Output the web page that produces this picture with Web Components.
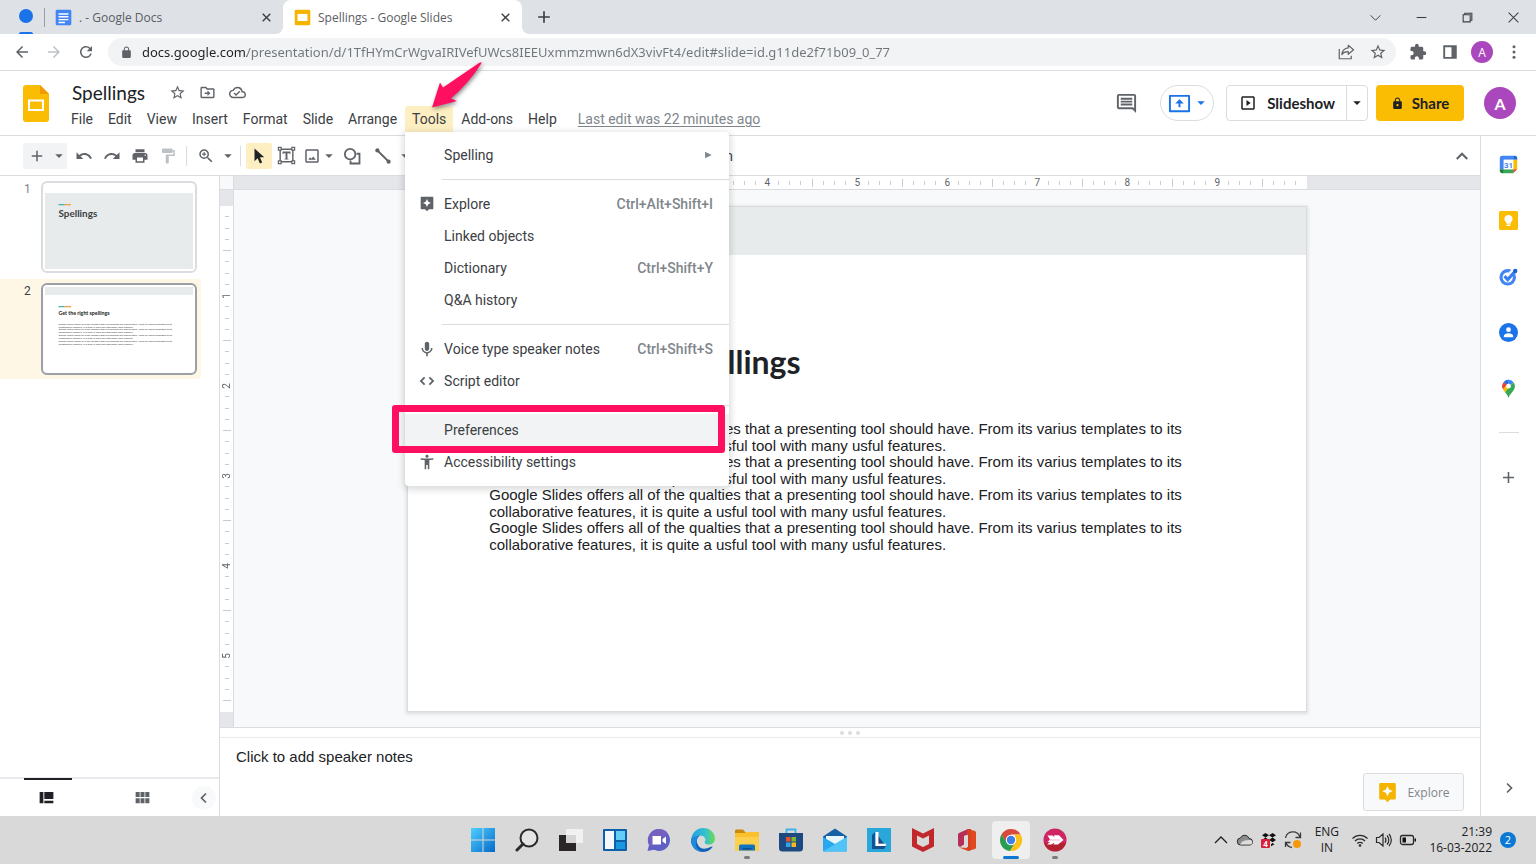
<!DOCTYPE html>
<html lang="en">
<head>
<meta charset="utf-8">
<title>Spellings - Google Slides</title>
<style>
  html, body {
    margin: 0;
    height: 100%;
  }
  body {
    font-family: Roboto, "Liberation Sans", sans-serif;
    font-size: 14px;
    color: #202124;
    overflow: hidden;
  }
</style>
</head>
<body>
<slides-window>
  <browser-tabs slot="tabs"></browser-tabs>
  <browser-bar slot="bar"></browser-bar>
  <app-header slot="header"></app-header>
  <edit-toolbar slot="toolbar"></edit-toolbar>
  <film-strip slot="film"></film-strip>
  <slide-canvas slot="canvas">
    <slide-page>
      <span slot="title">Get the right spellings</span>
      <p>Google Slides offers all of the qualties that a presenting tool should have. From its varius templates to its collaborative features, it is quite a usful tool with many usful features.</p>
      <p>Google Slides offers all of the qualties that a presenting tool should have. From its varius templates to its collaborative features, it is quite a usful tool with many usful features.</p>
      <p>Google Slides offers all of the qualties that a presenting tool should have. From its varius templates to its collaborative features, it is quite a usful tool with many usful features.</p>
      <p>Google Slides offers all of the qualties that a presenting tool should have. From its varius templates to its collaborative features, it is quite a usful tool with many usful features.</p>
    </slide-page>
  </slide-canvas>
  <speaker-notes slot="notes"></speaker-notes>
  <side-panel slot="side"></side-panel>
  <task-bar slot="taskbar"></task-bar>
</slides-window>

<script>
const ICONS = {
  back: '<path d="M20 11H7.83l5.59-5.59L12 4l-8 8 8 8 1.41-1.41L7.83 13H20v-2z"/>',
  forward: '<path d="M12 4l-1.41 1.41L16.17 11H4v2h12.17l-5.58 5.59L12 20l8-8z"/>',
  reload: '<path d="M17.65 6.35A7.958 7.958 0 0 0 12 4c-4.42 0-7.99 3.58-7.99 8s3.57 8 7.99 8c3.73 0 6.84-2.55 7.73-6h-2.08A5.99 5.99 0 0 1 12 18c-3.31 0-6-2.69-6-6s2.69-6 6-6c1.66 0 3.14.69 4.22 1.78L13 11h7V4l-2.35 2.35z"/>',
  lock: '<path d="M18 8h-1V6c0-2.76-2.24-5-5-5S7 3.24 7 6v2H6c-1.1 0-2 .9-2 2v10c0 1.1.9 2 2 2h12c1.1 0 2-.9 2-2V10c0-1.1-.9-2-2-2zm-2.9 0H8.9V6c0-1.71 1.39-3.1 3.1-3.1s3.1 1.39 3.1 3.1v2z"/>',
  lockHole: '<path d="M18 8h-1V6c0-2.76-2.24-5-5-5S7 3.24 7 6v2H6c-1.1 0-2 .9-2 2v10c0 1.1.9 2 2 2h12c1.1 0 2-.9 2-2V10c0-1.1-.9-2-2-2zm-6 9c-1.1 0-2-.9-2-2s.9-2 2-2 2 .9 2 2-.9 2-2 2zm3.1-9H8.9V6c0-1.71 1.39-3.1 3.1-3.1s3.1 1.39 3.1 3.1v2z"/>',
  share: '<g fill="none" stroke="currentColor" stroke-width="1.6" stroke-linejoin="round"><path d="M3 8v13h16v-4"/><path d="M15 3l7 6-7 6v-3.5c-4 0-6.500 1-8.500 4C7 10.500 10 7 15 6.500z"/></g>',
  star: '<path d="M22 9.24l-7.19-.62L12 2 9.19 8.63 2 9.24l5.46 4.73L5.82 21 12 17.27 18.18 21l-1.63-7.03L22 9.24zM12 15.4l-3.76 2.27 1-4.28-3.32-2.88 4.38-.38L12 6.1l1.71 4.04 4.38.38-3.32 2.88 1 4.28L12 15.4z"/>',
  puzzle: '<path d="M20.5 11H19V7c0-1.1-.9-2-2-2h-4V3.500a2.500 2.500 0 0 0-5 0V5H4c-1.100 0-1.990.9-1.990 2v3.800H3.500c1.490 0 2.700 1.210 2.700 2.700s-1.210 2.700-2.700 2.700H2V20c0 1.100.9 2 2 2h3.800v-1.500c0-1.490 1.210-2.700 2.700-2.700s2.700 1.210 2.700 2.700V22H17c1.100 0 2-.9 2-2v-4h1.500a2.500 2.500 0 0 0 0-5z"/>',
  panel: '<path d="M3 3h18v18H3zM5.500 5.500v13H14v-13z" fill-rule="evenodd"/>',
  dots: '<circle cx="12" cy="5" r="2"/><circle cx="12" cy="12" r="2"/><circle cx="12" cy="19" r="2"/>',
  close: '<path d="M5 5l14 14M19 5L5 19" stroke="currentColor" stroke-width="2.600"/>',
  winDown: '<path d="M3 8l9 9 9-9" fill="none" stroke="currentColor" stroke-width="1.800"/>',
  winMin: '<path d="M3 12h18" stroke="currentColor" stroke-width="2"/>',
  winRestore: '<path d="M4 7h13v13H4zM7 7V4h13v13h-3" fill="none" stroke="currentColor" stroke-width="2"/>',
  winClose: '<path d="M3 3l18 18M21 3L3 21" stroke="currentColor" stroke-width="1.900"/>',
  add: '<path d="M19 13h-6v6h-2v-6H5v-2h6V5h2v6h6v2z"/>',
  move: '<path d="M20 6h-8l-2-2H4c-1.100 0-2 .9-2 2v12c0 1.100.9 2 2 2h16c1.100 0 2-.9 2-2V8c0-1.100-.9-2-2-2zm0 12H4V6h5.170l2 2H20v10z"/><path d="M12 17l4-4-4-4v3H8v2h4z"/>',
  cloudDone: '<path d="M19.350 10.040A7.490 7.490 0 0 0 12 4C9.110 4 6.600 5.640 5.350 8.040A5.994 5.994 0 0 0 0 14c0 3.310 2.690 6 6 6h13c2.760 0 5-2.240 5-5 0-2.640-2.050-4.780-4.650-4.960zM19 18H6c-2.210 0-4-1.790-4-4 0-2.050 1.530-3.760 3.560-3.970l1.070-.11.5-.95A5.469 5.469 0 0 1 12 6c2.620 0 4.880 1.860 5.390 4.430l.3 1.500 1.530.11A2.980 2.980 0 0 1 22 15c0 1.650-1.350 3-3 3zm-9-3.820l-2.090-2.090L6.500 13.500 10 17l6.010-6.010-1.410-1.410z"/>',
  comment: '<path d="M21.990 4c0-1.100-.89-2-1.990-2H4c-1.100 0-2 .9-2 2v12c0 1.100.9 2 2 2h14l4 4-.01-18zM20 4v13.170L18.830 16H4V4h16zM6 12h12v2H6zm0-3h12v2H6zm0-3h12v2H6z"/>',
  present: '<path d="M2 3h20a1 1 0 0 1 1 1v16a1 1 0 0 1-1 1H2a1 1 0 0 1-1-1V4a1 1 0 0 1 1-1zm1 2v14h18V5z" fill-rule="evenodd"/><path d="M12 7.500l4.500 4.500H13v4h-2v-4H7.500z"/>',
  slideshow: '<path d="M10 8v8l5.500-4zM19 3H5c-1.100 0-2 .9-2 2v14c0 1.100.9 2 2 2h14c1.100 0 2-.9 2-2V5c0-1.100-.9-2-2-2zm0 16H5V5h14v14z"/>',
  caret: '<path d="M3 8h18l-9 9z"/>',
  caretRight: '<path d="M5 4l16 8-16 8z"/>',
  undo: '<path d="M12.500 8c-2.650 0-5.050.99-6.900 2.600L2 7v9h9l-3.620-3.620c1.390-1.160 3.160-1.880 5.120-1.880 3.540 0 6.550 2.310 7.600 5.500l2.370-.78C21.080 11.030 17.150 8 12.500 8z"/>',
  redo: '<path d="M18.400 10.600C16.550 8.990 14.150 8 11.500 8c-4.650 0-8.580 3.030-9.960 7.220L3.900 16a8.002 8.002 0 0 1 7.600-5.500c1.950 0 3.730.72 5.120 1.880L13 16h9V7l-3.600 3.600z"/>',
  print: '<path d="M19 8H5c-1.660 0-3 1.340-3 3v6h4v4h12v-4h4v-6c0-1.660-1.340-3-3-3zm-3 11H8v-5h8v5zm3-7c-.55 0-1-.45-1-1s.45-1 1-1 1 .45 1 1-.45 1-1 1zm-1-9H6v4h12V3z"/>',
  paint: '<path d="M18 4V3c0-.55-.45-1-1-1H5c-.55 0-1 .45-1 1v4c0 .55.45 1 1 1h12c.55 0 1-.45 1-1V6h1v4H9v11c0 .55.45 1 1 1h2c.55 0 1-.45 1-1v-9h8V4h-3z"/>',
  zoom: '<path d="M15.500 14h-.79l-.28-.27A6.471 6.471 0 0 0 16 9.500 6.500 6.500 0 1 0 9.500 16c1.610 0 3.090-.59 4.230-1.570l.27.28v.79l5 4.990L20.490 19l-4.990-5zm-6 0C7.010 14 5 11.990 5 9.500S7.010 5 9.500 5 14 7.010 14 9.500 11.990 14 9.500 14zM10.200 6.800H8.800v2h-2v1.400h2v2h1.400v-2h2V8.800h-2z"/>',
  pointer: '<path d="M6 2v17l4.200-4 3 7 3-1.300-3-6.900H19z"/>',
  textBox: '<path d="M4 4h16v16H4z" fill="none" stroke="currentColor" stroke-width="1.800"/><path d="M1 1h5v5H1zM18 1h5v5h-5zM1 18h5v5H1zM18 18h5v5h-5z"/><path d="M2.500 2.500h2v2h-2zM19.500 2.500h2v2h-2zM2.500 19.500h2v2h-2zM19.500 19.500h2v2h-2z" fill="#fff"/><path d="M7 7h10v3h-1.200V9.200h-2.600V16h1.300v1.200h-5V16h1.300V9.200H8.200V10H7z"/>',
  image: '<path d="M19 3H5c-1.100 0-2 .9-2 2v14c0 1.100.9 2 2 2h14c1.100 0 2-.9 2-2V5c0-1.100-.9-2-2-2zm0 16H5V5h14zM7 17l2.500-3.500 1.800 2.200 2.400-3.200L17 17z" fill-rule="evenodd"/>',
  shape: '<g fill="none" stroke="currentColor" stroke-width="2.400"><circle cx="9.500" cy="9.500" r="7"/><path d="M18 9h4v13H10v-4"/></g>',
  line: '<path d="M5 5l14 14" stroke="currentColor" stroke-width="2.400"/><circle cx="4.500" cy="4.500" r="2.800"/><circle cx="19.500" cy="19.500" r="2.800"/>',
  up: '<path d="M3 17l9-9 9 9" fill="none" stroke="currentColor" stroke-width="3.600"/>',
  left: '<path d="M16 3l-9 9 9 9" fill="none" stroke="currentColor" stroke-width="3.400"/>',
  right: '<path d="M8 3l9 9-9 9" fill="none" stroke="currentColor" stroke-width="3.400"/>',
  explore: '<path d="M20 1H4c-.8 0-1.500.7-1.500 1.500v16c0 .8.7 1.500 1.500 1.500h5l3 3 3-3h5c.8 0 1.500-.7 1.500-1.500v-16c0-.8-.7-1.500-1.500-1.500zm-6.100 11.400L12 16.500l-1.900-4.100L6 10.500l4.100-1.900L12 4.500l1.900 4.100L18 10.500z"/>',
  mic: '<path d="M12 15c2 0 3.300-1.500 3.300-3.300V4.300C15.300 2.500 14 1 12 1S8.700 2.500 8.700 4.300v7.400C8.700 13.500 10 15 12 15zm6-4.500c0 3.600-2.800 6.200-6 6.200s-6-2.600-6-6.200H3.700c0 4.200 3.200 7.500 7.100 8.100V23h2.400v-4.400c3.900-.6 7.100-3.900 7.100-8.100z"/>',
  code: '<path d="M9.400 16.600L4.800 12l4.600-4.600L7.500 5.500 1 12l6.500 6.500zm5.200 0l4.600-4.600-4.600-4.600 1.900-1.900L23 12l-6.500 6.500z"/>',
  person: '<path d="M12 1c1.300 0 2.400 1 2.400 2.300S13.300 5.600 12 5.600s-2.400-1-2.400-2.300S10.700 1 12 1zm9.500 7.500L15.500 9v14h-2.300v-6.500h-2.400V23H8.500V9l-6-.5V6.300l5.500.5h8l5.500-.5z"/>',
  filmView: '<path d="M1 3h6v18H1zM8.500 3H23v11.500H8.500zM8.500 17H23v4H8.500z"/>',
  gridView: '<path d="M1 3h6.500v8H1zM8.800 3h6.400v8H8.800zM16.500 3H23v8h-6.500zM1 13h6.500v8H1zM8.800 13h6.400v8H8.800zM16.500 13H23v8h-6.500z"/>',
  docs: '<rect x="1" y="1" width="22" height="22" rx="2" fill="#4285f4"/><path d="M5 7h14M5 11h14M5 15h14M5 19h9" stroke="#fff" stroke-width="2"/>',
  slides: '<rect x="1" y="1" width="22" height="22" rx="2" fill="#f4b400"/><path d="M5 7h14v10H5z" fill="#fff"/>',
  calendar: '<path d="M4 1h14v5H6v12H1V4a3 3 0 0 1 3-3z" fill="#4285f4"/><path d="M18 1h2a3 3 0 0 1 3 3v2h-5z" fill="#1967d2"/><path d="M18 6h5v12h-5z" fill="#fbbc04"/><path d="M6 18h12v5H6z" fill="#34a853"/><path d="M1 18h5v5H4a3 3 0 0 1-3-3z" fill="#188038"/><path d="M18 18h5l-5 5z" fill="#ea4335"/><path d="M6 6h12v12H6z" fill="#fff"/><text x="12" y="16" text-anchor="middle" font-family="Roboto, sans-serif" font-size="10" font-weight="700" fill="#4285f4">31</text>',
  keep: '<rect x="0" y="0" width="24" height="24" rx="2" fill="#fbbc04"/><path d="M12 5a5 5 0 0 1 2.800 9.200V16H9.200v-1.800A5 5 0 0 1 12 5zM9.600 17h4.800v2H9.600z" fill="#fff"/>',
  tasks: '<circle cx="11" cy="13" r="8.500" fill="none" stroke="#4285f4" stroke-width="4"/><path d="M15 9l7-7" stroke="#fff" stroke-width="7"/><path d="M7 11.500l4 4.500L19.500 6.500" fill="none" stroke="#3b7df0" stroke-width="4"/><circle cx="20.500" cy="5" r="2.800" fill="#1a5fd8"/>',
  contacts: '<circle cx="12" cy="12" r="12" fill="#1a73e8"/><circle cx="12" cy="8.500" r="3" fill="#fff"/><path d="M6 17c0-3 3-4.200 6-4.200s6 1.200 6 4.200v1H6z" fill="#fff"/>',
  maps: '<path d="M12 1a8 8 0 0 0-6.200 3L12 9z" fill="#1a73e8"/><path d="M5.800 4A8 8 0 0 0 5 13l7-5z" fill="#ea4335"/><path d="M12 1c-1 0-1.500 0-2 .3L14 9l4.300-5A8 8 0 0 0 12 1z" fill="#4285f4"/><path d="M5 13c.8 1.600 1.500 2.400 2.600 3.800L15 8.500 9 8z" fill="#fbbc04"/><path d="M18.300 4L7.600 16.800C9.500 19 11 20.500 12 24c1.200-4 3-5.500 5-8s3.500-4.500 3-8a8 8 0 0 0-1.700-4z" fill="#34a853"/><circle cx="12" cy="9" r="3" fill="#fff"/>'
};

class UiIcon extends HTMLElement {
  connectedCallback() {
    this.attachShadow({ mode: 'open' });
    this.shadowRoot.innerHTML = `
      <style>
        :host { display: inline-flex; width: var(--size, 18px); height: var(--size, 18px); flex: none; }
        svg { width: 100%; height: 100%; fill: currentColor; display: block; }
      </style>
      <svg viewBox="0 0 24 24" aria-hidden="true">${ICONS[this.getAttribute('name')]}</svg>
    `;
  }
}
customElements.define('ui-icon', UiIcon);

class SlidesWindow extends HTMLElement {
  connectedCallback() {
    this.attachShadow({ mode: 'open' });
    this.shadowRoot.innerHTML = `
      <style>
        :host { display: flex; flex-direction: column; height: 100vh; background: #fff; }
        .app { flex: 1; min-height: 0; display: flex; }
        .main { flex: 1; min-width: 0; display: flex; flex-direction: column; }
        .work { flex: 1; min-height: 0; display: flex; }
        .editor { flex: 1; min-width: 0; display: flex; flex-direction: column; }
      </style>
      <slot name="tabs"></slot>
      <slot name="bar"></slot>
      <slot name="header"></slot>
      <div class="app">
        <div class="main">
          <slot name="toolbar"></slot>
          <div class="work">
            <slot name="film"></slot>
            <div class="editor">
              <slot name="canvas"></slot>
              <slot name="notes"></slot>
            </div>
          </div>
        </div>
        <slot name="side"></slot>
      </div>
      <slot name="taskbar"></slot>
    `;
  }
}
customElements.define('slides-window', SlidesWindow);

class BrowserTabs extends HTMLElement {
  connectedCallback() {
    this.attachShadow({ mode: 'open' });
    this.shadowRoot.innerHTML = `
      <style>
        :host {
          display: flex;
          height: 34px;
          background: #dee1e6;
          color: #5a5e63;
          font: 12px "Open Sans", sans-serif;
        }
        button { border: 0; padding: 0; background: none; color: #3c4043; display: flex; align-items: center; justify-content: center; }
        .group { width: 44px; box-sizing: border-box; padding-left: 8px; display: grid; grid-template-rows: 1fr 2px; justify-items: center; align-items: center; align-content: stretch; }
        .dot { width: 14px; height: 14px; border-radius: 50%; background: #1a73e8; }
        .under { width: 14px; height: 2px; border-radius: 2px 2px 0 0; background: #1a73e8; }
        .tab { width: 239px; box-sizing: border-box; padding: 0 10px 0 11px; display: flex; align-items: center; gap: 7px; }
        .tab span { flex: 1; white-space: nowrap; }
        .tab ui-icon { --size: 17px; }
        .tab button ui-icon { --size: 13px; }
        .first { position: relative; }
        .first::before { content: ""; position: absolute; left: 0; top: 8px; height: 19px; width: 1px; background: #9a9da1; }
        .active { position: relative; background: #fff; border-radius: 8px 8px 0 0; }
        .active::before, .active::after { content: ""; position: absolute; bottom: 0; width: 8px; height: 8px; }
        .active::before { right: 100%; background: radial-gradient(circle at 0 0, transparent 8px, #fff 8px); }
        .active::after { left: 100%; background: radial-gradient(circle at 100% 0, transparent 8px, #fff 8px); }
        .new { width: 44px; }
        .new ui-icon { --size: 20px; }
        .win { margin-left: auto; display: flex; }
        .win button { width: 46px; }
        .win ui-icon { --size: 13px; }
      </style>
      <button class="group" aria-label="Tab group"><i class="dot"></i><i class="under"></i></button>
      <div class="tab first"><ui-icon name="docs"></ui-icon><span>. - Google Docs</span><button aria-label="Close tab"><ui-icon name="close"></ui-icon></button></div>
      <div class="tab active"><ui-icon name="slides"></ui-icon><span>Spellings - Google Slides</span><button aria-label="Close tab"><ui-icon name="close"></ui-icon></button></div>
      <button class="new" aria-label="New tab"><ui-icon name="add"></ui-icon></button>
      <div class="win">
        <button aria-label="Search tabs"><ui-icon name="winDown"></ui-icon></button>
        <button aria-label="Minimise"><ui-icon name="winMin"></ui-icon></button>
        <button aria-label="Restore"><ui-icon name="winRestore"></ui-icon></button>
        <button aria-label="Close"><ui-icon name="winClose"></ui-icon></button>
      </div>
    `;
  }
}
customElements.define('browser-tabs', BrowserTabs);

class BrowserBar extends HTMLElement {
  connectedCallback() {
    this.attachShadow({ mode: 'open' });
    this.shadowRoot.innerHTML = `
      <style>
        :host { display: flex; align-items: center; height: 36px; padding: 0 6px; border-bottom: 1px solid #dadce0; color: #5f6368; }
        button { border: 0; padding: 0; width: 32px; height: 28px; background: none; color: inherit; display: flex; align-items: center; justify-content: center; }
        button[disabled] { color: #bdc1c6; }
        .box { flex: 1; margin: 0 6px; height: 28px; padding: 0 2px 0 12px; border-radius: 14px; background: #f1f3f4; display: flex; align-items: center; gap: 9px; box-sizing: border-box; }
        .box > ui-icon { --size: 13px; }
        .acts { display: flex; }
        /* the host part of the address is darker than its path */
        input {
          flex: 1;
          min-width: 0;
          border: 0;
          padding: 0;
          outline: none;
          font: 13px "Noto Sans", "Open Sans", sans-serif;
          color: #5f6368;
          background: linear-gradient(90deg, #202124 105px, #70757a 105px) text;
          -webkit-text-fill-color: transparent;
        }
        .me { width: 22px; height: 22px; margin: 0 5px; border-radius: 50%; background: #ab47bc; color: #fff; font: 12px "Open Sans", sans-serif; }
      </style>
      <button aria-label="Back"><ui-icon name="back"></ui-icon></button>
      <button aria-label="Forward" disabled><ui-icon name="forward"></ui-icon></button>
      <button aria-label="Reload"><ui-icon name="reload"></ui-icon></button>
      <div class="box">
        <ui-icon name="lock"></ui-icon>
        <input aria-label="Address" value="docs.google.com/presentation/d/1TfHYmCrWgvaIRIVefUWcs8IEEUxmmzmwn6dX3vivFt4/edit#slide=id.g11de2f71b09_0_77">
        <div class="acts">
          <button aria-label="Share page"><ui-icon name="share"></ui-icon></button>
          <button aria-label="Bookmark"><ui-icon name="star"></ui-icon></button>
        </div>
      </div>
      <button aria-label="Extensions"><ui-icon name="puzzle"></ui-icon></button>
      <button aria-label="Side panel"><ui-icon name="panel"></ui-icon></button>
      <button class="me" aria-label="Profile">A</button>
      <button aria-label="More"><ui-icon name="dots"></ui-icon></button>
    `;
  }
}
customElements.define('browser-bar', BrowserBar);

class ToolsMenu extends HTMLElement {
  connectedCallback() {
    this.attachShadow({ mode: 'open' });
    this.shadowRoot.innerHTML = `
      <style>
        :host { display: block; width: 324px; padding: 7px 0 8px; box-sizing: border-box; background: #fff; border-radius: 0 4px 4px 4px; box-shadow: 0 2px 6px 2px rgba(60, 64, 67, .18); }
        button { position: relative; width: 100%; height: 32px; border: 0; padding: 0 16px 0 13px; background: none; font: 14px Roboto, sans-serif; color: #3c4043; display: grid; grid-template-columns: 18px 1fr auto; gap: 8px; align-items: center; text-align: left; }
        button > ui-icon { --size: 16px; color: #5f6368; justify-self: center; }
        kbd { font: 500 14px Roboto, sans-serif; color: #80868b; }
        button > ui-icon.sub { --size: 10px; grid-column: 3; color: #80868b; }
        span { grid-column: 2; }
        hr { border: 0; border-top: 1px solid #dadce0; margin: 8px 0 8px 37px; }
        .hover { background: #f1f3f4; }
        .frame { position: absolute; inset: -9px 4px -7px -13px; border: 7px solid #ff0f5f; border-radius: 3px; pointer-events: none; }
      </style>
      <button><span>Spelling</span><ui-icon class="sub" name="caretRight"></ui-icon></button>
      <hr>
      <button><ui-icon name="explore"></ui-icon><span>Explore</span><kbd>Ctrl+Alt+Shift+I</kbd></button>
      <button><span>Linked objects</span></button>
      <button><span>Dictionary</span><kbd>Ctrl+Shift+Y</kbd></button>
      <button><span>Q&amp;A history</span></button>
      <hr>
      <button><ui-icon name="mic"></ui-icon><span>Voice type speaker notes</span><kbd>Ctrl+Shift+S</kbd></button>
      <button><ui-icon name="code"></ui-icon><span>Script editor</span></button>
      <hr>
      <button class="hover"><span>Preferences</span><i class="frame"></i></button>
      <button><ui-icon name="person"></ui-icon><span>Accessibility settings</span></button>
    `;
  }
}
customElements.define('tools-menu', ToolsMenu);

class AppHeader extends HTMLElement {
  connectedCallback() {
    this.attachShadow({ mode: 'open' });
    this.shadowRoot.innerHTML = `
      <style>
        :host { position: relative; z-index: 5; display: flex; height: 64px; padding: 0 20px 0 23px; border-bottom: 1px solid #dadce0; }
        button { border: 0; padding: 0; background: none; font: inherit; color: inherit; display: flex; align-items: center; }
        .logo { width: 26px; height: 37px; margin-top: 14px; }
        .mid { margin-left: 15px; display: flex; flex-direction: column; justify-content: flex-end; padding-bottom: 3px; }
        .name { display: flex; align-items: center; height: 28px; gap: 13px; padding-left: 6px; }
        .name input { field-sizing: content; border: 0; padding: 0 2px; margin-right: 9px; font: 19px Lato, sans-serif; color: #202124; }
        .name button { color: #5f6368; }
        .name ui-icon { --size: 17px; }
        nav { display: flex; align-items: center; height: 26px; gap: 1px; }
        nav > button, .tools > button { height: 26px; padding: 0 7px; border-radius: 3px 3px 0 0; color: #3c4043; }
        .tools { position: relative; }
        .tools > button { background: #feefc3; }
        .tools tools-menu { position: absolute; left: 0; top: 26px; }
        .arrow { position: absolute; left: 24px; top: -46px; width: 56px; height: 50px; filter: drop-shadow(1px 2px 2px rgba(0, 0, 0, .45)); pointer-events: none; }
        a { margin-left: 13px; color: #80868b; text-underline-offset: 2px; }
        .right { margin-left: auto; display: flex; align-items: center; }
        .chat { color: #5f6368; --size: 23px; }
        .pill { width: 54px; height: 36px; margin: 0 12px 0 22px; border: 1px solid #dadce0; border-radius: 18px; justify-content: center; gap: 5px; color: #1a73e8; box-sizing: border-box; --size: 23px; }
        .split { display: flex; height: 36px; box-sizing: border-box; border: 1px solid #dadce0; border-radius: 4px; margin-right: 8px; font: 700 15px Lato, sans-serif; }
        .split .go { padding: 0 11px 0 12px; gap: 10px; --size: 18px; }
        .split .more { width: 21px; border-left: 1px solid #dadce0; justify-content: center; }
        .small { --size: 10px; }
        .share { width: 88px; height: 36px; border-radius: 4px; background: #fbbc04; justify-content: center; gap: 8px; font: 700 15px Lato, sans-serif; --size: 13px; }
        .me { width: 32px; height: 32px; margin-left: 20px; border-radius: 50%; background: #ab47bc; color: #fff; font: 700 16px Lato, sans-serif; justify-content: center; }
      </style>
      <svg class="logo" viewBox="0 0 26 37" aria-hidden="true">
        <path d="M3 0h14l9 9v25a3 3 0 0 1-3 3H3a3 3 0 0 1-3-3V3a3 3 0 0 1 3-3z" fill="#fbbc04"/>
        <path d="M17 0l9 9h-9z" fill="#f29900"/>
        <path d="M6 15.500h14v9.500H6z" fill="none" stroke="#fff" stroke-width="2"/>
      </svg>
      <div class="mid">
        <div class="name">
          <input aria-label="Document name" value="Spellings">
          <button aria-label="Star"><ui-icon name="star"></ui-icon></button>
          <button aria-label="Move"><ui-icon name="move"></ui-icon></button>
          <button aria-label="Saved to Drive"><ui-icon name="cloudDone"></ui-icon></button>
        </div>
        <nav>
          <button>File</button>
          <button>Edit</button>
          <button>View</button>
          <button>Insert</button>
          <button>Format</button>
          <button>Slide</button>
          <button>Arrange</button>
          <div class="tools">
            <button>Tools</button>
            <tools-menu></tools-menu>
            <svg class="arrow" viewBox="0 0 56 50" aria-hidden="true">
              <path d="M3 47.500L11 22.500l3 5L50 3q4-2 2 1Q40 23 22 38.500l6 2.500z" fill="#ff0f5f"/>
            </svg>
          </div>
          <button>Add-ons</button>
          <button>Help</button>
          <a href="#history">Last edit was 22 minutes ago</a>
        </nav>
      </div>
      <div class="right">
        <button class="chat" aria-label="Comments"><ui-icon name="comment"></ui-icon></button>
        <button class="pill" aria-label="Present to a meeting"><ui-icon name="present"></ui-icon><ui-icon class="small" name="caret"></ui-icon></button>
        <div class="split">
          <button class="go"><ui-icon name="slideshow"></ui-icon>Slideshow</button>
          <button class="more" aria-label="Slideshow options"><ui-icon class="small" name="caret"></ui-icon></button>
        </div>
        <button class="share"><ui-icon name="lockHole"></ui-icon>Share</button>
        <button class="me" aria-label="Account">A</button>
      </div>
    `;
  }
}
customElements.define('app-header', AppHeader);

class EditToolbar extends HTMLElement {
  connectedCallback() {
    this.attachShadow({ mode: 'open' });
    this.shadowRoot.innerHTML = `
      <style>
        :host { display: flex; align-items: center; height: 39px; padding: 0 7px 0 23px; border-bottom: 1px solid #dadce0; color: #5f6368; }
        button { width: 28px; height: 26px; border: 0; padding: 0; background: none; color: inherit; font: 14px Roboto, sans-serif; display: flex; align-items: center; justify-content: center; }
        .add { background: #f1f3f4; border-radius: 2px 0 0 2px; }
        .drop { width: 16px; --size: 10px; }
        .add + .drop { background: #f1f3f4; border-radius: 0 2px 2px 0; margin-right: 3px; }
        button[disabled] { color: #bdc1c6; }
        .on { width: 26px; background: #feefc3; color: #202124; border-radius: 2px; }
        .image { width: 24px; }
        .image + .drop { width: 10px; margin-right: 4px; }
        .line { margin-left: 3px; }
        i { width: 1px; height: 20px; background: #dadce0; margin: 0 5px 0 4px; }
        .texts { display: flex; justify-content: flex-end; width: 327px; }
        .texts button { width: auto; padding: 0 7px; color: #3c4043; }
        .hide { margin-left: auto; width: 22px; --size: 14px; }
        .box { --size: 19px; }
      </style>
      <button class="add" aria-label="New slide"><ui-icon name="add"></ui-icon></button>
      <button class="drop" aria-label="New slide with layout"><ui-icon name="caret"></ui-icon></button>
      <button aria-label="Undo"><ui-icon name="undo"></ui-icon></button>
      <button aria-label="Redo"><ui-icon name="redo"></ui-icon></button>
      <button aria-label="Print"><ui-icon name="print"></ui-icon></button>
      <button aria-label="Paint format" disabled><ui-icon name="paint"></ui-icon></button>
      <i></i>
      <button aria-label="Zoom"><ui-icon name="zoom"></ui-icon></button>
      <button class="drop" aria-label="Zoom levels"><ui-icon name="caret"></ui-icon></button>
      <i></i>
      <button class="on" aria-label="Select"><ui-icon name="pointer"></ui-icon></button>
      <button class="box" aria-label="Text box"><ui-icon name="textBox"></ui-icon></button>
      <button class="image" aria-label="Insert image"><ui-icon name="image"></ui-icon></button>
      <button class="drop" aria-label="Image sources"><ui-icon name="caret"></ui-icon></button>
      <button aria-label="Shape"><ui-icon name="shape"></ui-icon></button>
      <button class="line" aria-label="Line"><ui-icon name="line"></ui-icon></button>
      <button class="drop" aria-label="Line kinds"><ui-icon name="caret"></ui-icon></button>
      <div class="texts"><button>Transition</button></div>
      <button class="hide" aria-label="Hide the menus"><ui-icon name="up"></ui-icon></button>
    `;
  }
}
customElements.define('edit-toolbar', EditToolbar);

class FilmStrip extends HTMLElement {
  connectedCallback() {
    const long = 'Google Slides offers all of the qualties that a presenting tool should have. From its varius templates to its';
    const short = 'collaborative features, it is quite a usful tool with many usful features.';
    let lines = '';
    for (let i = 0; i < 8; i++) {
      lines += `<text x="82" y="${227 + i * 17}">${i % 2 ? short : long}</text>`;
    }
    this.attachShadow({ mode: 'open' });
    this.shadowRoot.innerHTML = `
      <style>
        :host { display: flex; flex-direction: column; width: 219px; border-right: 1px solid #dadce0; }
        ol { flex: 1; list-style: none; margin: 0; padding: 1px 18px 0 0; display: flex; flex-direction: column; gap: 2px; }
        li { height: 100px; box-sizing: border-box; padding: 4px 4px 4px 24px; display: flex; justify-content: space-between; border-radius: 0 3px 3px 0; font-size: 12px; color: #80868b; }
        li span { padding-top: 1px; }
        .sel { background: #fef7e6; color: #3c4043; }
        .thumb { width: 156px; height: 92px; box-sizing: border-box; border: 2px solid #dadce0; border-radius: 6px; padding: 2px; background: #fff; }
        .sel .thumb { border-color: #9aa0a6; }
        svg { display: block; width: 100%; height: 100%; }
        footer { height: 37px; border-top: 2px solid #e8eaed; display: flex; padding: 0 3px 0 24px; align-items: center; }
        button { border: 0; padding: 0; background: none; display: flex; align-items: center; justify-content: center; color: #5f6368; --size: 15px; }
        .view { position: relative; width: 44px; height: 37px; }
        .film { color: #202124; }
        .film::before { content: ""; position: absolute; left: 0; top: -1px; width: 48px; height: 2px; background: #202124; }
        .grid { margin-left: 52px; }
        .fold { margin-left: auto; width: 24px; height: 24px; border-radius: 50%; background: #f8f9fa; --size: 12px; }
      </style>
      <ol>
        <li><span>1</span><div class="thumb">
          <svg viewBox="0 0 898 505" preserveAspectRatio="none">
            <path d="M0 48h898v457H0z" fill="#e8ebeb"/>
            <path d="M82 114h38v8H82z" fill="#4db6ac"/><path d="M120 114h38v8h-38z" fill="#f6a040"/>
            <text x="82" y="190" font-family="Lato, sans-serif" font-size="60" font-weight="700" fill="#3c4043">Spellings</text>
          </svg>
        </div></li>
        <li class="sel"><span>2</span><div class="thumb">
          <svg viewBox="0 0 898 505" preserveAspectRatio="none">
            <path d="M0 0h898v48H0z" fill="#e8ebeb"/>
            <path d="M82 114h38v8H82z" fill="#4db6ac"/><path d="M120 114h38v8h-38z" fill="#f6a040"/>
            <text x="82" y="167" font-family="Lato, sans-serif" font-size="32" font-weight="700" fill="#202124">Get the right spellings</text>
            <g font-family="Liberation Sans, sans-serif" font-size="15" fill="#202124">${lines}</g>
          </svg>
        </div></li>
      </ol>
      <footer>
        <button class="view film" aria-label="Filmstrip view"><ui-icon name="filmView"></ui-icon></button>
        <button class="view grid" aria-label="Grid view"><ui-icon name="gridView"></ui-icon></button>
        <button class="fold" aria-label="Hide filmstrip"><ui-icon name="left"></ui-icon></button>
      </footer>
    `;
  }
}
customElements.define('film-strip', FilmStrip);

// One cell per eighth of an inch, with a half cell at both ends
class SlideRuler extends HTMLElement {
  connectedCallback() {
    const eighths = Number(this.getAttribute('eighths'));
    let cells = '<i class="end"></i>';
    for (let i = 1; i < eighths; i++) {
      if (i % 8 === 0) cells += `<i><b>${i / 8}</b></i>`;
      else cells += `<i><u class="${i % 4 === 0 ? 'half' : ''}"></u></i>`;
    }
    cells += '<i class="end"></i>';
    this.attachShadow({ mode: 'open' });
    this.shadowRoot.innerHTML = `
      <style>
        :host { display: flex; background: #fff; }
        i { flex: 2 1 0; min-width: 0; min-height: 0; display: flex; align-items: center; justify-content: center; font-style: normal; }
        .end { flex-grow: 1; }
        b { font: 10px Roboto, sans-serif; color: #5f6368; }
        u { width: 1px; height: 4px; background: #c8cbcf; }
        .half { height: 8px; }
        :host([vertical]) { flex-direction: column; }
        :host([vertical]) u { width: 4px; height: 1px; }
        :host([vertical]) .half { width: 8px; }
        :host([vertical]) b { writing-mode: vertical-rl; transform: rotate(180deg); }
      </style>
      ${cells}
    `;
  }
}
customElements.define('slide-ruler', SlideRuler);

class SlideCanvas extends HTMLElement {
  connectedCallback() {
    this.attachShadow({ mode: 'open' });
    this.shadowRoot.innerHTML = `
      <style>
        :host {
          --slide-h: calc(100vh - 358px);
          --slide-w: calc(var(--slide-h) * 16 / 9);
          flex: 1;
          min-height: 0;
          display: grid;
          grid-template: 13px 1fr / 13px 1fr;
          gap: 1px;
          background: #dadce0;
        }
        .corner { background: #f8f9fa; }
        .top { display: flex; justify-content: center; background: #e4e6ea; }
        .top slide-ruler { width: var(--slide-w); }
        .side { display: flex; flex-direction: column; justify-content: center; background: #e4e6ea; }
        .side slide-ruler { height: var(--slide-h); }
        .stage { display: grid; place-content: center; background: #f8f9fa; overflow: hidden; }
        ::slotted(slide-page) { width: var(--slide-w); height: var(--slide-h); }
      </style>
      <div class="corner"></div>
      <div class="top"><slide-ruler eighths="80"></slide-ruler></div>
      <div class="side"><slide-ruler vertical eighths="45"></slide-ruler></div>
      <div class="stage"><slot></slot></div>
    `;
  }
}
customElements.define('slide-canvas', SlideCanvas);

class SlidePage extends HTMLElement {
  connectedCallback() {
    this.attachShadow({ mode: 'open' });
    this.shadowRoot.innerHTML = `
      <style>
        :host { display: block; box-sizing: border-box; border: 1px solid #dadce0; background: #fff; box-shadow: 0 1px 3px 1px rgba(60, 64, 67, .15); }
        .band { height: 48px; background: #e8ebeb; }
        .text { padding: 65px 81px 0; }
        .accent { width: 76px; height: 8px; background: linear-gradient(90deg, #4db6ac 50%, #f6a040 50%); }
        h1 { margin: 14px 0 38px; font: 700 32px/40px Lato, sans-serif; color: #202124; }
        .body { font: 15px/17px "Liberation Sans", Arial, sans-serif; color: #202124; }
        ::slotted(p) { margin: 0 0 -1px; }
      </style>
      <div class="band"></div>
      <div class="text">
        <div class="accent"></div>
        <h1><slot name="title"></slot></h1>
        <div class="body"><slot></slot></div>
      </div>
    `;
  }
}
customElements.define('slide-page', SlidePage);

class SpeakerNotes extends HTMLElement {
  connectedCallback() {
    this.attachShadow({ mode: 'open' });
    this.shadowRoot.innerHTML = `
      <style>
        :host { display: flex; flex-direction: column; height: 89px; }
        .grip { height: 9px; border-top: 1px solid #dadce0; border-bottom: 1px solid #e8eaed; display: flex; align-items: center; justify-content: center; gap: 4px; }
        .grip i { width: 4px; height: 4px; border-radius: 50%; background: #dadce0; }
        .row { flex: 1; display: flex; padding: 0 16px; }
        textarea { flex: 1; border: 0; outline: none; resize: none; padding: 9px 0 0; font: 15px/20px "Liberation Sans", Arial, sans-serif; color: #202124; }
        textarea::placeholder { color: #202124; }
        button { align-self: flex-end; width: 101px; height: 38px; margin-bottom: 5px; border: 1px solid #dadce0; border-radius: 3px; background: #f8f9fa; color: #80868b; font: 12px "Open Sans", sans-serif; display: flex; align-items: center; justify-content: center; gap: 9px; --size: 21px; padding: 0; }
        button ui-icon { color: #f4b400; }
      </style>
      <div class="grip"><i></i><i></i><i></i></div>
      <div class="row">
        <textarea aria-label="Speaker notes" placeholder="Click to add speaker notes"></textarea>
        <button><ui-icon name="explore"></ui-icon>Explore</button>
      </div>
    `;
  }
}
customElements.define('speaker-notes', SpeakerNotes);

class SidePanel extends HTMLElement {
  connectedCallback() {
    this.attachShadow({ mode: 'open' });
    this.shadowRoot.innerHTML = `
      <style>
        :host { display: flex; flex-direction: column; align-items: center; width: 55px; border-left: 1px solid #dadce0; }
        button { width: 40px; height: 56px; border: 0; padding: 0; background: none; color: #5f6368; display: flex; align-items: center; justify-content: center; --size: 19px; }
        hr { width: 20px; border: 0; border-top: 1px solid #dadce0; margin: 16px 0; }
        .last { margin-top: auto; --size: 12px; }
      </style>
      <button aria-label="Calendar"><ui-icon name="calendar"></ui-icon></button>
      <button aria-label="Keep"><ui-icon name="keep"></ui-icon></button>
      <button aria-label="Tasks"><ui-icon name="tasks"></ui-icon></button>
      <button aria-label="Contacts"><ui-icon name="contacts"></ui-icon></button>
      <button aria-label="Maps"><ui-icon name="maps"></ui-icon></button>
      <hr>
      <button aria-label="Get add-ons"><ui-icon name="add"></ui-icon></button>
      <button class="last" aria-label="Hide side panel"><ui-icon name="right"></ui-icon></button>
    `;
  }
}
customElements.define('side-panel', SidePanel);

const APPS = [
  ['Start', '<defs><linearGradient id="a" x2="1" y2="1"><stop stop-color="#4fd0ff"/><stop offset="1" stop-color="#0669c9"/></linearGradient></defs><path d="M0 0h11.500v11.500H0zM12.500 0H24v11.500H12.500zM0 12.500h11.500V24H0zM12.500 12.500H24V24H12.500z" fill="url(#a)"/>'],
  ['Search', '<circle cx="14" cy="10" r="8.500" fill="#e4e4e4" stroke="#2b2b2b" stroke-width="2"/><path d="M8 16l-6 6" stroke="#2b2b2b" stroke-width="3" stroke-linecap="round"/>'],
  ['Task view', '<path d="M0 7h17v16H0z" fill="#2b2728"/><path d="M7 1h17v14H7z" fill="#f4f4f4" opacity=".85"/>'],
  ['Widgets', '<rect y="1" width="24" height="22" rx="1" fill="#0f5fa8"/><path d="M2 3h9v18H2z" fill="#f5f8fb"/><path d="M13 3h9v9h-9z" fill="#63cdf7"/><path d="M13 14h9v7h-9z" fill="#1b96e0"/>'],
  ['Chat', '<path d="M12 1a11 11 0 1 1-5 20.800L.5 23l1.500-6A11 11 0 0 1 12 1z" fill="#5e60c4"/><path d="M12 1a11 11 0 0 1 9 4.500L4 19a11 11 0 0 1 8-18z" fill="#8560c0" opacity=".6"/><path d="M5.500 8h8.500v8.500H5.500zM15.500 11l3.500-2.500v7.500l-3.500-2.500z" fill="#fff"/>'],
  ['Edge', '<defs><linearGradient id="e" x2="1"><stop stop-color="#1f9fe0"/><stop offset=".6" stop-color="#35c1d0"/><stop offset="1" stop-color="#6cdc4c"/></linearGradient></defs><path d="M0 12C1 4 6.500 0 12 0c7 0 12 5 12 10.500 0 4-3 6-6 6-3.500 0-5-1.500-4-3 1.500-3-1-6-5-6-4 0-7.500 2-9 4.500z" fill="url(#e)"/><path d="M0 12c1.500-3 5-4.500 9-4.500-3 2-4 5-2.500 8.500C8 20 12 22 17 20c2-.7 4-2 4.500-1.500S18 24 12 24C5 24 0 18.500 0 12z" fill="#1260b5"/><path d="M9 7.500C5 7.500 2 10 0 12c0 7 6 12 12 12-5-1.500-7.500-5-7-9.500.3-3 2-5.500 4-7z" fill="#1d8ae0"/>'],
  ['File Explorer', '<path d="M0 3c0-1 .5-1.500 1.500-1.500H8L11 5H0z" fill="#c98a08"/><path d="M0 5h10l2-1h12v18.500H0z" fill="#fbc02d"/><path d="M0 9h24v13.500H0z" fill="#fcd04c"/><path d="M4 22.500V18a1.500 1.500 0 0 1 1.500-1.500h13A1.500 1.500 0 0 1 20 18v4.500z" fill="#1273c0"/><path d="M7.500 20h9v1.500h-9z" fill="#0c4f90"/>', 'run'],
  ['Store', '<path d="M7.500 5V1.500h9V5" fill="none" stroke="#3fb2e8" stroke-width="1.800"/><path d="M0 5h24v15a3.500 3.500 0 0 1-3.500 3.500h-17A3.500 3.500 0 0 1 0 20z" fill="#1c4a80"/><path d="M7 9h4.500v4.500H7z" fill="#e8502c"/><path d="M12.500 9H17v4.500h-4.500z" fill="#7cb72b"/><path d="M7 14.500h4.500V19H7z" fill="#2aa6ea"/><path d="M12.500 14.500H17V19h-4.500z" fill="#fbb71e"/>'],
  ['Mail', '<path d="M0 8.500L12 .5l12 8V13H0z" fill="#155fa5"/><path d="M3 8h18v9H3z" fill="#e8f5fd"/><path d="M0 9l12 7 12-7v13.500a1 1 0 0 1-1 1H1a1 1 0 0 1-1-1z" fill="#29a8ee"/><path d="M24 9L0 23.500h23a1 1 0 0 0 1-1z" fill="#50c4f7"/>'],
  ['Lists', '<path d="M0 0h24v24H0z" fill="#28a8da"/><path d="M8 4L5 7v14h12l2-3z" fill="#17508a"/><text x="7" y="18" font-family="Liberation Sans, sans-serif" font-weight="700" font-size="20" fill="#fff">L</text>'],
  ['McAfee', '<path d="M1 0l11 5.500L23 0v18.500L12 24 1 18.500zM6 7.500v8.500l6 3 6-3V7.500l-6 3z" fill="#c2272d" fill-rule="evenodd"/>'],
  ['Office', '<path d="M3 6.500Q3 5.500 4 5l9-4h3v5L9 8v8.500L5 19l-2-1.500z" fill="#b52e55"/><path d="M13 1l7 2q1 .5 1 1.500v15q0 1-1 1.500l-7 2-9-3.500 9 .5z" fill="#e04a20"/><path d="M13 1l2.500.8v20.500L13 23l-1-3.500V1.500z" fill="#d6401c"/><path d="M9 8l4-1.200V19H9z" fill="#d9d9d9"/>'],
  ['Chrome', '<path d="M12 1a11 11 0 0 1 9.600 5.500H12L7 14 2.400 6.600A11 11 0 0 1 12 1z" fill="#d84a3c"/><path d="M2.400 6.600A11 11 0 0 0 11 23l5.500-8.500-9-.5z" fill="#2b9d52"/><path d="M21.600 6.500A11 11 0 0 1 11 23l5.500-8.500L16 6.500z" fill="#fbc116"/><circle cx="12" cy="12" r="5.200" fill="#fff"/><circle cx="12" cy="12" r="4.200" fill="#3d7fe8"/>', 'open'],
  ['Skitch', '<circle cx="12" cy="12" r="11.500" fill="#cf2464"/><path d="M1 15a11.500 11.500 0 0 0 22 0z" fill="#b3202f"/><path d="M4.500 7.500h5l2 1.800-.5-2h5L20.500 12 15 16.500h-4.500l1-2-3 2H4l3-2.500H4.500l2.500-2.500z" fill="#fff"/><path d="M7 12h10" stroke="#e8a0bb" stroke-width=".8"/>', 'run']
];

class TaskBar extends HTMLElement {
  connectedCallback() {
    const apps = APPS.map(([name, svg, state]) => `<button class="app ${state || ''}" aria-label="${name}"><svg viewBox="0 0 24 24">${svg}</svg></button>`).join('');
    this.attachShadow({ mode: 'open' });
    this.shadowRoot.innerHTML = `
      <style>
        :host { display: grid; grid-template-columns: 1fr auto 1fr; height: 48px; background: #d9d9d9; font: 12px/16px "Open Sans", sans-serif; color: #202020; }
        button { border: 0; padding: 0; background: none; font: inherit; color: inherit; display: flex; align-items: center; justify-content: center; }
        .apps { grid-column: 2; display: flex; align-items: center; padding-left: 2px; }
        .app { position: relative; width: 38px; height: 38px; margin: 0 3px; border-radius: 4px; }
        .app svg { width: 24px; height: 24px; }
        .open { background: #efefef; }
        .open::after, .run::after { content: ""; position: absolute; bottom: 0; width: 16px; height: 3px; border-radius: 2px; background: #0a78d4; }
        .run::after { width: 6px; background: #7a7a7a; }
        .tray { display: flex; align-items: center; justify-content: flex-end; padding-right: 20px; }
        .tray svg { width: 18px; height: 18px; display: block; }
        .tray button { width: 24px; height: 40px; }
        .tray .lang { width: 43px; text-align: center; }
        .tray .clock { width: auto; margin-left: 9px; text-align: right; }
        .count { width: 16px; height: 16px; margin-left: 8px; border-radius: 50%; background: #0a78d4; color: #fff; font-size: 11px; text-align: center; }
      </style>
      <div class="apps">${apps}</div>
      <div class="tray">
        <button aria-label="Hidden icons"><svg viewBox="0 0 18 18"><path d="M3 12l6-6 6 6" fill="none" stroke="#202020" stroke-width="1.300"/></svg></button>
        <button aria-label="OneDrive"><svg viewBox="0 0 18 18"><path d="M5 14a3.500 3.500 0 0 1-.5-7A4.500 4.500 0 0 1 13 7.500a3.300 3.300 0 0 1 1 6.500z" fill="#8c8c8c" stroke="#2a2a2a"/><path d="M4 13.500c2-4 6-4.500 10.500-4.500a2.300 2.300 0 0 1 0 4.500z" fill="#ddd"/></svg></button>
        <button aria-label="Dropbox"><svg viewBox="0 0 18 18"><path d="M5.500 2l3.500 2.300-3.500 2.300L2 4.300zM12.500 2L16 4.300l-3.500 2.300L9 4.300zM5.500 6.600L9 8.900l-3.500 2.300L2 8.900zM12.500 6.600L16 8.900l-3.500 2.300L9 8.900zM12.500 12l2 1.300-3.500 2v-2z" fill="#111"/><rect x="1" y="8" width="9" height="9" rx="1" fill="#d8203c"/><text x="5.500" y="15.500" text-anchor="middle" font-family="Open Sans, sans-serif" font-size="8" font-weight="700" fill="#fff">4</text></svg></button>
        <button aria-label="Sync"><svg viewBox="0 0 18 18"><path d="M1.500 7a7.500 7.500 0 0 1 14.500-1M16.500 1.500V6.500h-5M8 16.500A7.500 7.500 0 0 1 2 12M6.500 11.500h-5v4.500" fill="none" stroke="#3a3a3a" stroke-width="1.300"/><circle cx="13" cy="13" r="4" fill="#f7980a"/></svg></button>
        <button class="lang">ENG<br>IN</button>
        <button aria-label="Network"><svg viewBox="0 0 18 18"><path d="M1.500 7.500a10.500 10.500 0 0 1 15 0M4 10a7 7 0 0 1 10 0M6.300 12.500a3.800 3.800 0 0 1 5.400 0" fill="none" stroke="#2a2a2a" stroke-width="1.300"/><circle cx="9" cy="14.500" r="1.300" fill="#2a2a2a"/></svg></button>
        <button aria-label="Volume"><svg viewBox="0 0 18 18"><path d="M1.500 6.500H4l4-3.500v12l-4-3.500H1.500zM10 6.500a4 4 0 0 1 0 5M12 4.500a6.500 6.500 0 0 1 0 9M14 3a9 9 0 0 1 0 12" fill="none" stroke="#2a2a2a" stroke-width="1.200"/></svg></button>
        <button aria-label="Battery"><svg viewBox="0 0 18 18"><rect x="1.500" y="4.500" width="13" height="9" rx="2" fill="none" stroke="#2a2a2a" stroke-width="1.300"/><path d="M3.500 6.500h3.500v5H3.500zM15.500 7.500H17v3h-1.500z" fill="#111"/></svg></button>
        <button class="clock">21:39<br>16-03-2022</button>
        <span class="count">2</span>
      </div>
    `;
  }
}
customElements.define('task-bar', TaskBar);
</script>
</body>
</html>
